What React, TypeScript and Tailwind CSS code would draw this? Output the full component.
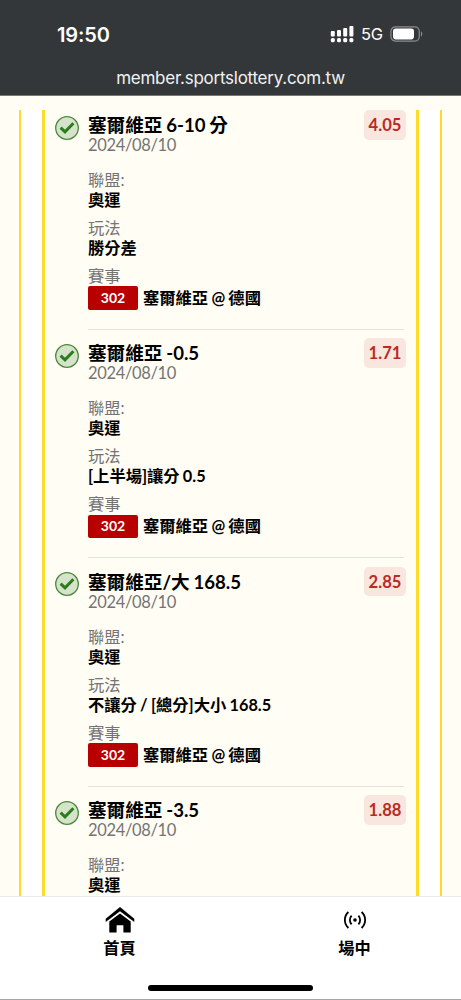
import React from 'react'

interface Bet {
  title: string
  odds: string
  play?: string
}

const bets: Bet[] = [
  { title: '塞爾維亞 6-10 分', play: '勝分差', odds: '4.05' },
  { title: '塞爾維亞 -0.5', play: '[上半場]讓分 0.5', odds: '1.71' },
  { title: '塞爾維亞/大 168.5', play: '不讓分 / [總分]大小 168.5', odds: '2.85' },
  { title: '塞爾維亞 -3.5', odds: '1.88' }
]

const StatusBar: React.FC = () => (
  <header className="h-[96px] shrink-0 bg-[#343739] border-b border-[#777876] font-['Inter',sans-serif] text-white">
    <div className="h-[68px] flex items-center justify-between pl-[57px] pr-[37px]">
      <span className="mt-px text-[20px] font-semibold tracking-[-0.1px]">19:50</span>
      <div className="flex items-center">
        <svg width="24" height="17" viewBox="0 0 24 17" fill="white">
          <rect x="0.8" y="5" width="4" height="5.5" rx="1" />
          <rect x="7" y="4" width="4" height="6.5" rx="1" />
          <rect x="13.2" y="2" width="4" height="8.5" rx="1" />
          <rect x="19.4" y="0" width="4" height="10.5" rx="1" />
          <rect x="0.8" y="12" width="4" height="4.2" rx="1.5" />
          <rect x="7" y="12" width="4" height="4.2" rx="1.5" />
          <rect x="13.2" y="12" width="4" height="4.2" rx="1.5" />
          <rect x="19.4" y="12" width="4" height="4.2" rx="1.5" />
        </svg>
        <span className="mt-px ml-[7px] w-[22px] whitespace-nowrap text-[16.5px] tracking-[-0.4px]">5G</span>
        <svg className="ml-[7px]" width="34" height="16" viewBox="0 0 34 16">
          <rect x="0.9" y="0.9" width="28.4" height="14.2" rx="4.5" fill="none" stroke="#8b8d8e" strokeWidth="1.2" />
          <rect x="3" y="2.6" width="21" height="10.8" rx="2.8" fill="white" />
          <path d="M31 5.5c1.7.5 1.7 4.5 0 5z" fill="#8b8d8e" />
        </svg>
      </div>
    </div>
    <div className="mt-px h-[20px] flex items-center justify-center text-[17px] tracking-[-0.25px] text-[#f1f1f1]">
      member.sportslottery.com.tw
    </div>
  </header>
)

const CheckIcon: React.FC = () => (
  <svg className="mt-[5.5px] shrink-0" width="24" height="24" viewBox="0 0 24 24" fill="none">
    <circle cx="12" cy="12" r="11.3" fill="#d5e3cb" stroke="#49883a" strokeWidth="1.3" />
    <path d="M5.6 11.6l4.4 4.2L18.4 7.2" stroke="#2b7d1c" strokeWidth="3" />
  </svg>
)

const BetItem: React.FC<{ bet: Bet }> = ({ bet }) => (
  <article className="flex h-[228.4px] shrink-0 pl-[9.5px] pr-[10px]">
    <CheckIcon />
    <div className="ml-[9.5px] flex-1 whitespace-nowrap text-[16.3px] leading-[20px] [word-spacing:-0.7px]">
      <div className="flex h-[55px] justify-between">
        <div className="pt-[5px]">
          <h2 className="h-5 text-[18.6px] leading-[20px] font-bold">{bet.title}</h2>
          <p className="h-5 text-[16.5px] leading-[20.6px] tracking-[-0.35px] text-[#747474]">2024/08/10</p>
        </div>
        <span className="flex h-[29.5px] w-[42px] items-center justify-center rounded-[5px] bg-[#f8e6df] text-[16.6px] font-bold text-[#bb2a22]">
          {bet.odds}
        </span>
      </div>
      <dl className={bet.play ? 'mt-[5px] mr-[2px] h-[160px] border-b border-[#e4e3dd]' : 'mt-[5px]'}>
        <dt className="h-5 text-[#747474]">聯盟:</dt>
        <dd className="h-5 font-bold">奧運</dd>
        {bet.play && (
          <>
            <dt className="mt-2 h-5 text-[#747474]">玩法</dt>
            <dd className="h-5 font-bold">{bet.play}</dd>
            <dt className="mt-2 h-5 text-[#747474]">賽事</dt>
            <dd className="flex h-6 items-center font-bold">
              <span className="mr-[5px] flex h-[23.5px] w-[50px] items-center justify-center rounded-[2px] bg-[#b80000] text-[14px] text-white">302</span>
              塞爾維亞 @ 德國
            </dd>
          </>
        )}
      </dl>
    </div>
  </article>
)

const BottomNav: React.FC = () => (
  <footer className="relative h-[104.5px] shrink-0 border-t border-[#eaeaea] bg-white">
    <nav className="flex h-[64px] text-[16.2px] leading-[22px] font-bold">
      <div className="flex w-[239px] shrink-0 flex-col items-center">
        <svg className="mt-[9px]" width="30" height="28" viewBox="0 0 30 28">
          <path d="M15 1L0.7 12.7v3.2L15 5.2l14.3 10.7v-3.2z" />
          <path d="M4.3 15.4L15 7.5l10.7 7.9V26.5h-7.3v-7.3h-6.8v7.3H4.3z" />
        </svg>
        <span className="mt-[3px]">首頁</span>
      </div>
      <div className="flex flex-1 flex-col items-center pl-[9px]">
        <svg className="mt-[14px]" width="22" height="18" viewBox="0 0 22 18" fill="none" stroke="black" strokeWidth="1.8">
          <circle cx="11" cy="9" r="1.8" fill="black" stroke="none" />
          <path d="M7.6 4.6c-2.3 2.5-2.3 6.3 0 8.8M14.4 4.6c2.3 2.5 2.3 6.3 0 8.8M4.4 1C-.3 5.4-.3 12.6 4.4 17M17.6 1c4.7 4.4 4.7 11.6 0 16" />
        </svg>
        <span className="mt-[8px]">場中</span>
      </div>
    </nav>
    <div className="mx-auto mt-[24.5px] h-[6px] w-[165px] rounded-full bg-black" />
    <div className="absolute inset-x-0 bottom-0 h-px bg-[#a5a5a5]" />
  </footer>
)

export default function App() {
  return (
    <div className="flex h-[1000px] w-[461px] flex-col overflow-hidden bg-[#fffdf4] font-['Lato','Noto_Sans_CJK_TC',sans-serif] text-black">
      <StatusBar />
      <main className="min-h-0 flex-1 overflow-hidden px-[19px] pt-[14px]">
        <div className="h-full border-x-[2px] border-[#ffda2c] bg-white px-[21px]">
          <section className="flex h-full flex-col overflow-hidden border-x-[3px] border-[#ffda2c] bg-[#fffdf4]">
            {bets.map(bet => <BetItem key={bet.title} bet={bet} />)}
          </section>
        </div>
      </main>
      <BottomNav />
    </div>
  )
}
